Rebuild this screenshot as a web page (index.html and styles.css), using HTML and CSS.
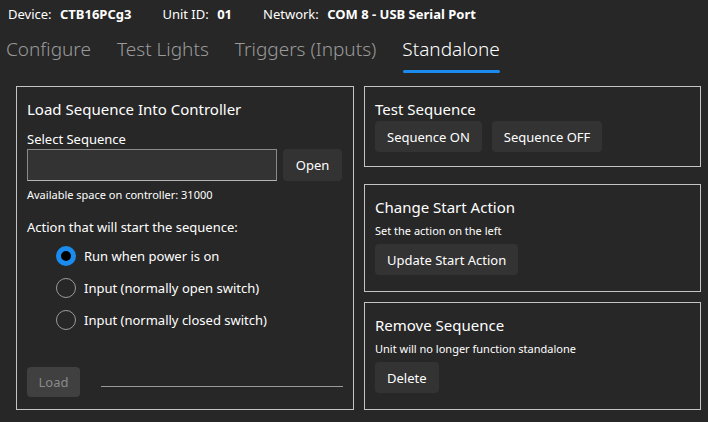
FILE: index.html
```html
<!DOCTYPE html>
<html lang="en">
<head>
<meta charset="UTF-8">
<title>Standalone</title>
<link rel="stylesheet" href="styles.css">
</head>
<body>

<div class="status">
  <span>Device: <b>CTB16PCg3</b></span>
  <span>Unit ID: <b>01</b></span>
  <span>Network: <b>COM 8 - USB Serial Port</b></span>
</div>

<div class="tabs">
  <div class="tab">Configure</div>
  <div class="tab">Test Lights</div>
  <div class="tab">Triggers (Inputs)</div>
  <div class="tab active">Standalone</div>
</div>

<div class="main">
  <div class="panel load">
    <h2>Load Sequence Into Controller</h2>
    <label class="field-label">Select Sequence</label>
    <div class="file-row">
      <div class="file-box"></div>
      <button class="btn">Open</button>
    </div>
    <div class="small">Available space on controller: 31000</div>

    <div class="action-label">Action that will start the sequence:</div>
    <div class="radios">
      <div class="radio checked"><span class="dot"></span>Run when power is on</div>
      <div class="radio"><span class="dot"></span>Input (normally open switch)</div>
      <div class="radio"><span class="dot"></span>Input (normally closed switch)</div>
    </div>

    <div class="load-row">
      <button class="btn disabled">Load</button>
      <div class="progress"></div>
    </div>
  </div>

  <div class="side">
    <div class="panel test">
      <h2>Test Sequence</h2>
      <div class="btn-row">
        <button class="btn">Sequence ON</button>
        <button class="btn">Sequence OFF</button>
      </div>
    </div>

    <div class="panel change">
      <h2>Change Start Action</h2>
      <div class="small">Set the action on the left</div>
      <button class="btn">Update Start Action</button>
    </div>

    <div class="panel remove">
      <h2>Remove Sequence</h2>
      <div class="small">Unit will no longer function standalone</div>
      <button class="btn">Delete</button>
    </div>
  </div>
</div>

</body>
</html>
```

FILE: styles.css
```css
body {
  margin: 0;
  background: #272727;
  color: #fff;
  font-family: "Noto Sans", "Open Sans", sans-serif;
  width: 708px;
  height: 422px;
  overflow: hidden;
}

.status {
  display: flex;
  gap: 31px;
  padding: 5px 8px 0;
  height: 23px;
  font-size: 13px;
  line-height: 18px;
}

.status b {
  margin-left: 5px;
}

.tabs {
  display: flex;
  gap: 26px;
  padding: 8px 6px 0;
  height: 49px;
  box-sizing: border-box;
}

.tab {
  font-size: 19px;
  line-height: 26px;
  color: #9a9a9a;
  font-weight: 300;
  position: relative;
}

.tab.active {
  color: #fff;
}

.tab.active::after {
  content: "";
  position: absolute;
  left: 1px;
  right: 0;
  top: 34px;
  height: 3px;
  border-radius: 2px;
  background: #1a8cf0;
}

.main {
  display: grid;
  grid-template-columns: 338px 337px;
  gap: 10px;
  padding: 9px 0 0 16px;
}

.panel {
  border: 1px solid #c4c4c4;
  box-sizing: border-box;
  padding: 12px 10px;
}

h2 {
  margin: 0;
  font-size: 15px;
  font-weight: 400;
  line-height: 20px;
}

.load {
  height: 324px;
  display: flex;
  flex-direction: column;
}

.field-label {
  font-size: 13px;
  margin-top: 11px;
  line-height: 18px;
}

.file-row {
  display: flex;
  gap: 6px;
  margin-top: 1px;
}

.file-box {
  width: 250px;
  height: 32px;
  box-sizing: border-box;
  background: #333;
  border: 1px solid #8a8a8a;
  border-bottom-color: #b5b5b5;
}

.btn {
  font-family: inherit;
  font-size: 13px;
  color: #fff;
  background: #333;
  border: none;
  border-radius: 4px;
  padding: 0 12px;
  height: 32px;
}

.file-row .btn {
  width: 59px;
}

.small {
  font-size: 11px;
  line-height: 15px;
  margin-top: 6px;
}

.action-label {
  font-size: 13px;
  line-height: 18px;
  margin-top: 16px;
}

.radios {
  display: flex;
  flex-direction: column;
  gap: 12px;
  margin-top: 10px;
  padding-left: 29px;
}

.radio {
  display: flex;
  align-items: center;
  gap: 8px;
  font-size: 13px;
  height: 20px;
}

.dot {
  width: 20px;
  height: 20px;
  box-sizing: border-box;
  border-radius: 50%;
  border: 1px solid #9a9a9a;
}

.radio.checked .dot {
  border: 5px solid #1a8cf0;
  background: #000;
}

.load-row {
  margin-top: auto;
  display: flex;
  align-items: center;
  gap: 21px;
}

.btn.disabled {
  background: #404040;
  color: #8a8a8a;
  width: 53px;
  height: 30px;
  padding: 0;
}

.progress {
  flex: 1;
  height: 1px;
  background: #999;
  margin-top: 8px;
}

.side {
  display: flex;
  flex-direction: column;
}

.test {
  height: 81px;
}

.change {
  height: 108px;
  margin-top: 17px;
}

.remove {
  height: 108px;
  margin-top: 10px;
}

.btn-row {
  display: flex;
  gap: 10px;
  margin-top: 2px;
}

.btn-row .btn {
  height: 31px;
}

.change .btn, .remove .btn {
  height: 31px;
  margin-top: 6px;
}
```
